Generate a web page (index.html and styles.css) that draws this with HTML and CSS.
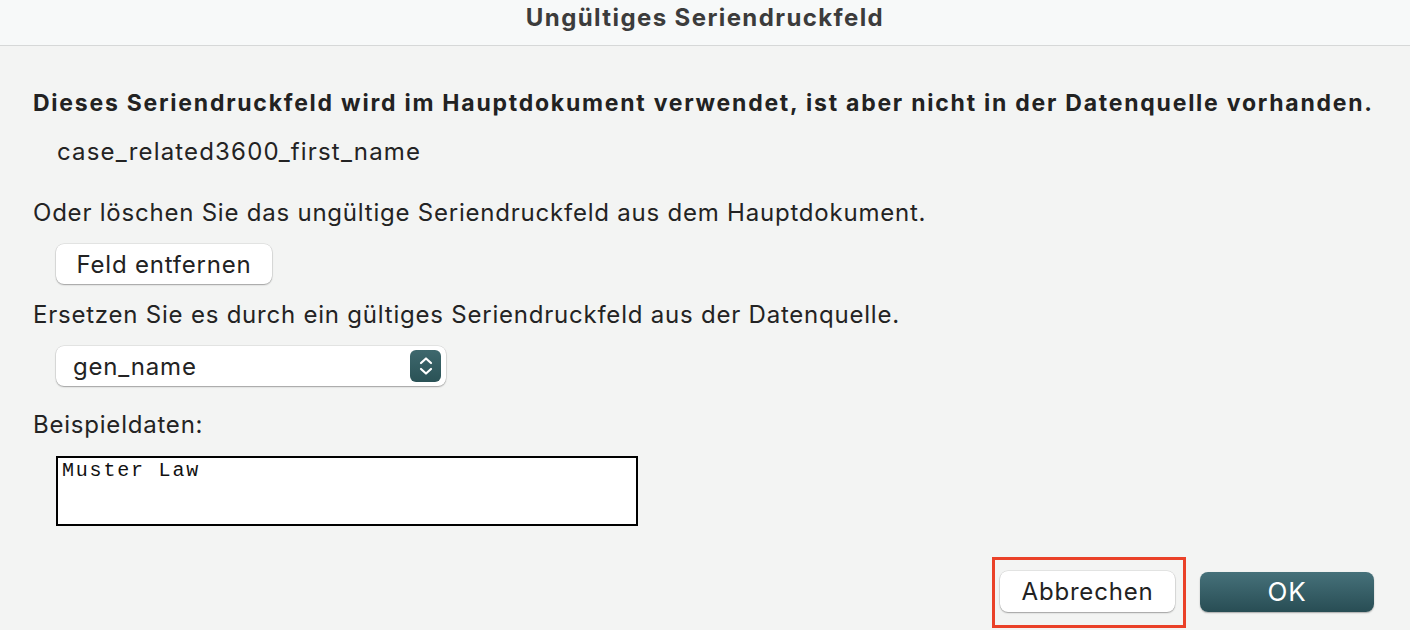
FILE: index.html
```html
<!DOCTYPE html>
<html lang="de">
<head>
<meta charset="utf-8">
<title>Ungültiges Seriendruckfeld</title>
<link rel="stylesheet" href="styles.css">
</head>
<body>
<div class="window">
  <header class="titlebar">Ungültiges Seriendruckfeld</header>
  <main class="content">
    <p class="headline">Dieses Seriendruckfeld wird im Hauptdokument verwendet, ist aber nicht in der Datenquelle vorhanden.</p>
    <p class="fieldname">case_related3600_first_name</p>
    <p class="label remove-label">Oder löschen Sie das ungültige Seriendruckfeld aus dem Hauptdokument.</p>
    <div class="indent"><button class="btn">Feld entfernen</button></div>
    <p class="label replace-label">Ersetzen Sie es durch ein gültiges Seriendruckfeld aus der Datenquelle.</p>
    <div class="indent">
      <div class="select">
        <span class="select-value">gen_name</span>
        <span class="select-arrows">
          <svg width="16" height="22" viewBox="0 0 16 22"><path d="M3 8 L8 3.5 L13 8 M3 14 L8 18.5 L13 14" fill="none" stroke="#fff" stroke-width="2.2" stroke-linecap="round" stroke-linejoin="round"/></svg>
        </span>
      </div>
    </div>
    <p class="label sample-label">Beispieldaten:</p>
    <div class="indent"><div class="sample">Muster Law</div></div>
    <div class="actions">
      <div class="highlight"><button class="btn btn-cancel">Abbrechen</button></div>
      <button class="btn btn-primary">OK</button>
    </div>
  </main>
</div>
</body>
</html>
```
FILE: styles.css
```css
* { box-sizing: border-box; }
html, body { margin: 0; padding: 0; }
body {
  width: 1410px;
  height: 630px;
  overflow: hidden;
  background: #f3f4f3;
  font-family: Inter, "Liberation Sans", sans-serif;
  color: #232323;
}
.window { display: flex; flex-direction: column; height: 630px; }
.titlebar {
  height: 46px;
  flex: none;
  background: #f7f9f9;
  border-bottom: 1px solid #d6d8d8;
  text-align: center;
  font-weight: 700;
  font-size: 24px;
  letter-spacing: 1.4px;
  line-height: 36px;
  color: #3c3c3c;
}
.content { padding: 0 0 0 33px; display: flex; flex-direction: column; flex: 1; }
p { margin: 0; }
.headline {
  font-weight: 700;
  font-size: 23px;
  letter-spacing: 1.76px;
  line-height: 28px;
  margin-top: 43px;
  color: #222;
  white-space: nowrap;
}
.fieldname { font-size: 24px; letter-spacing: 1.17px; line-height: 28px; margin: 21px 0 0 24px; }
.label { font-size: 24px; letter-spacing: 0.78px; line-height: 28px; white-space: nowrap; }
.remove-label { margin-top: 33px; }
.indent { padding-left: 23px; }
.btn {
  font-family: Inter, "Liberation Sans", sans-serif;
  font-size: 24px;
  letter-spacing: 0.8px;
  color: #222;
  background: #fff;
  border: none;
  border-radius: 8px;
  box-shadow: 0 0 0 0.5px rgba(0,0,0,0.12), 0 1px 1.5px rgba(0,0,0,0.3);
  height: 40px;
  padding: 0;
}
.indent .btn { width: 216px; margin-top: 17px; }
.replace-label { margin-top: 17px; }
.select {
  margin-top: 17px;
  width: 390px;
  height: 40px;
  background: #fff;
  border-radius: 8px;
  box-shadow: 0 0 0 0.5px rgba(0,0,0,0.12), 0 1px 1.5px rgba(0,0,0,0.3);
  display: flex;
  align-items: center;
  justify-content: space-between;
  padding: 0 5px 0 17px;
  font-size: 24px;
  letter-spacing: 0.8px;
}
.select-arrows {
  width: 31px;
  height: 32px;
  border-radius: 6px;
  background: linear-gradient(#3e686d, #2a5256);
  display: flex;
  align-items: center;
  justify-content: center;
}
.sample-label { margin-top: 25px; }
.sample {
  margin-top: 17px;
  width: 582px;
  height: 70px;
  background: #fff;
  border: 2px solid #000;
  font-family: "Liberation Mono", monospace;
  font-size: 20px;
  letter-spacing: 1.8px;
  line-height: 22px;
  padding: 2px 0 0 4px;
  color: #111;
}
.actions {
  margin-top: auto;
  display: flex;
  align-items: center;
  justify-content: flex-end;
  padding-right: 36px;
  margin-bottom: 2px;
  gap: 14px;
}
.highlight {
  border: 3px solid #ea4128;
  padding: 11px 8px 13px 5px;
}
.btn-cancel { width: 175px; height: 41px; display: block; }
.btn-primary {
  width: 174px;
  height: 40px;
  background: linear-gradient(#46717a, #284d54);
  color: #fff;
  box-shadow: 0 1px 1.5px rgba(0,0,0,0.3);
  font-size: 26px;
  margin-bottom: 2px;
}
```
